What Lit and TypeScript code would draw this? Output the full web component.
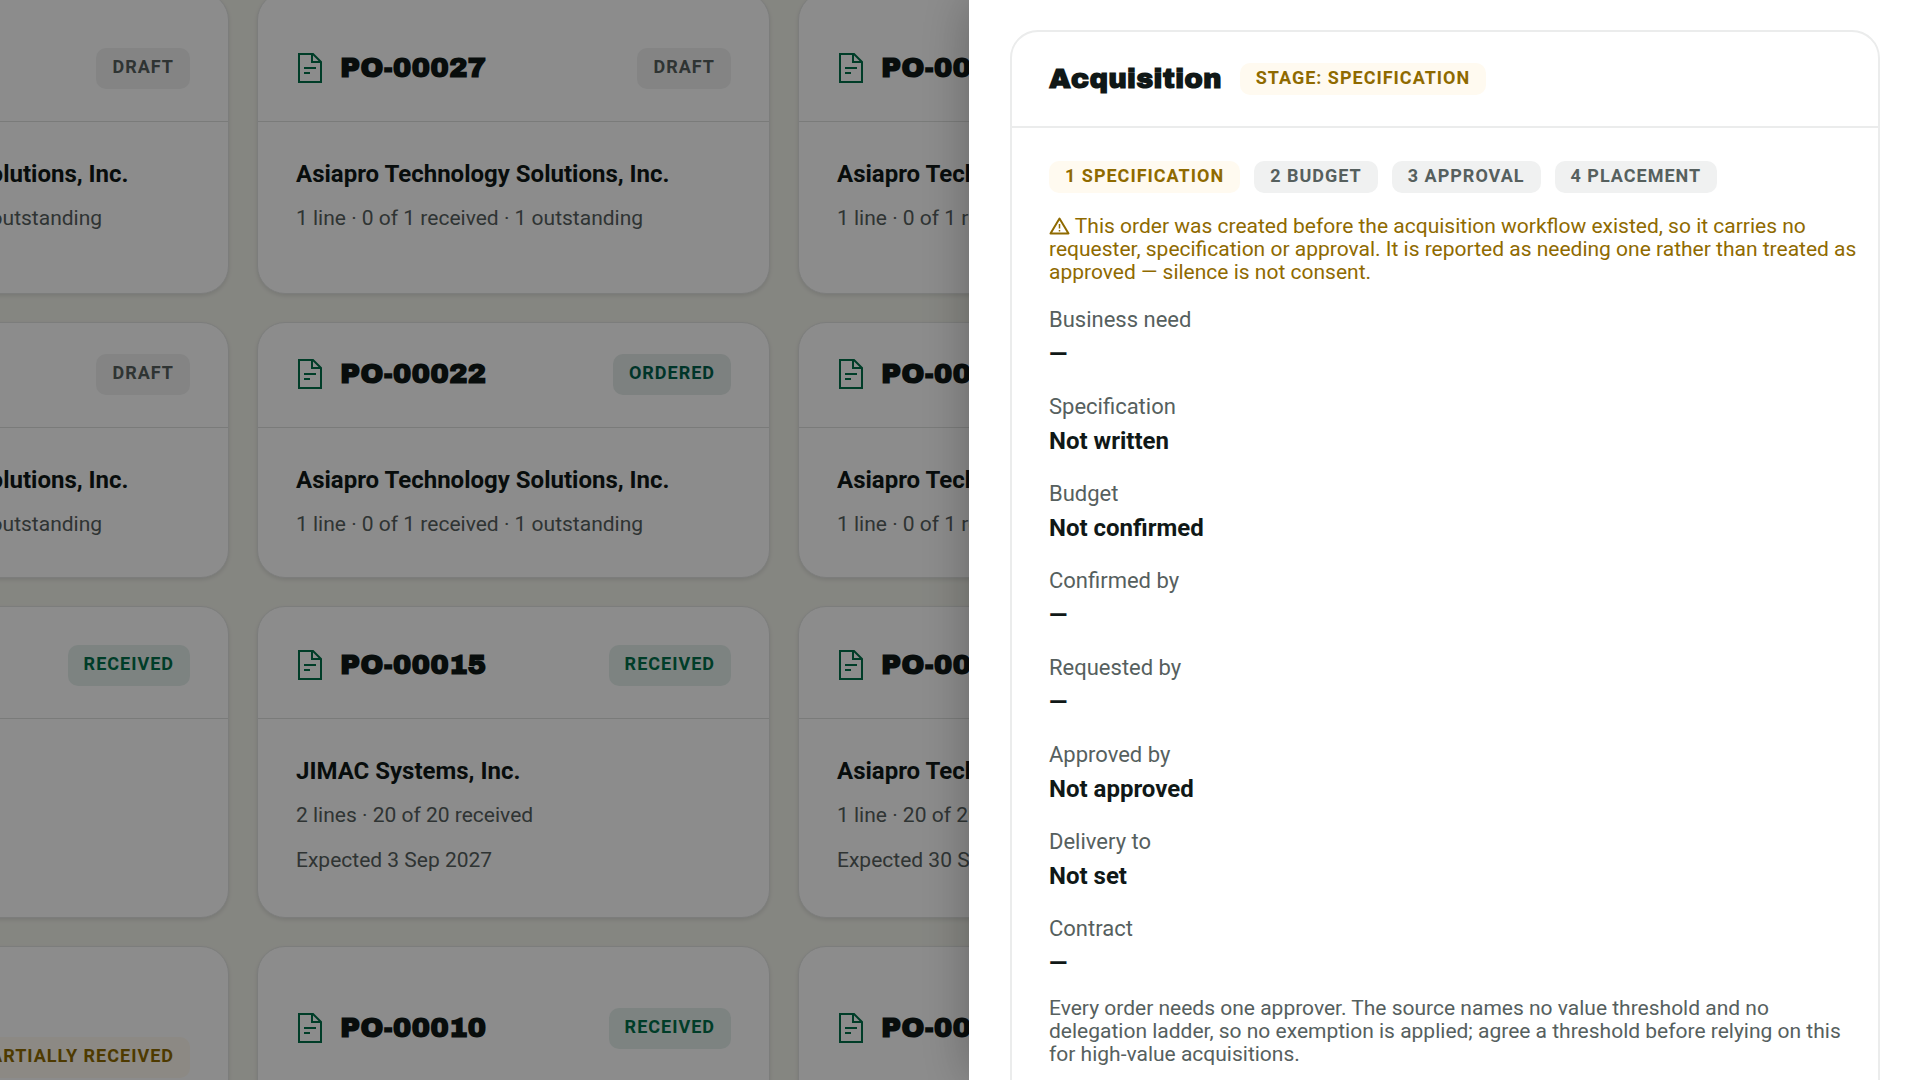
import { LitElement, html, css, svg } from "lit";
import { customElement, property } from "lit/decorators.js";

type Tone = "neutral" | "info" | "success" | "warning";

interface Order {
  number: string;
  status: string;
  tone: Tone;
  supplier: string;
  lines: string[];
}

interface OrderRow {
  size: string;
  orders: Order[];
}

const ASIAPRO = "Asiapro Technology Solutions, Inc.";
const JIMAC = "JIMAC Systems, Inc.";
const OPEN_LINE = "1 line · 0 of 1 received · 1 outstanding";

const order = (number: string, status: string, tone: Tone, supplier: string, ...lines: string[]): Order => ({
  number,
  status,
  tone,
  supplier,
  lines,
});

const ROWS: OrderRow[] = [
  {
    size: "tall",
    orders: [
      order("PO-00028", "Draft", "neutral", ASIAPRO, OPEN_LINE),
      order("PO-00027", "Draft", "neutral", ASIAPRO, OPEN_LINE),
      order("PO-00026", "Draft", "neutral", ASIAPRO, OPEN_LINE),
    ],
  },
  {
    size: "compact",
    orders: [
      order("PO-00023", "Draft", "neutral", ASIAPRO, OPEN_LINE),
      order("PO-00022", "Ordered", "info", ASIAPRO, OPEN_LINE),
      order("PO-00021", "Ordered", "info", ASIAPRO, OPEN_LINE),
    ],
  },
  {
    size: "regular",
    orders: [
      order("PO-00016", "Received", "success", JIMAC, "1 line · 5 of 5 received"),
      order("PO-00015", "Received", "success", JIMAC, "2 lines · 20 of 20 received", "Expected 3 Sep 2027"),
      order("PO-00014", "Received", "success", ASIAPRO, "1 line · 20 of 20 received", "Expected 30 Sep 2027"),
    ],
  },
  {
    size: "wrapped",
    orders: [
      order("PO-00011", "Partially received", "warning", JIMAC, "1 line · 5 of 10 received"),
      order("PO-00010", "Received", "success", JIMAC, "1 line · 5 of 5 received"),
      order("PO-00009", "Received", "success", ASIAPRO, "1 line · 5 of 5 received"),
    ],
  },
];

const STEPS = ["Specification", "Budget", "Approval", "Placement"];

const FIELDS: [string, string][] = [
  ["Business need", "—"],
  ["Specification", "Not written"],
  ["Budget", "Not confirmed"],
  ["Confirmed by", "—"],
  ["Requested by", "—"],
  ["Approved by", "Not approved"],
  ["Delivery to", "Not set"],
  ["Contract", "—"],
];

const documentIcon = svg`
  <path d="M1 1H15L23 9V29H1Z" />
  <path d="M14 1V9H23" />
  <path d="M6 15H18M6 20H12" />
`;

@customElement("status-badge")
export class StatusBadge extends LitElement {
  @property() tone: Tone = "neutral";

  static styles = css`
    :host {
      display: inline-flex;
      flex: none;
      font: 700 18px/23px Roboto, "Liberation Sans", sans-serif;
    }
    .badge {
      padding: 3px 16px 6px;
      border-radius: 10px;
      letter-spacing: 1px;
      text-transform: uppercase;
      white-space: nowrap;
    }
    :host([size="large"]) .badge {
      padding: 7px 16px 11px;
    }
    .neutral {
      background: #f0f1f1;
      color: #56605e;
    }
    .info {
      background: #e3ebe9;
      color: #00614c;
    }
    .success {
      background: #e4efec;
      color: #00704a;
    }
    .warning {
      background: #fffaf0;
      color: #8f6a00;
    }
  `;

  render() {
    return html`<span class="badge ${this.tone}"><slot></slot></span>`;
  }
}

@customElement("order-card")
export class OrderCard extends LitElement {
  @property({ attribute: false }) order!: Order;

  static styles = css`
    :host {
      display: block;
      min-width: 0;
    }
    .card {
      height: 100%;
      box-sizing: border-box;
      border: 1px solid #e2e4e2;
      border-radius: 28px;
      background: #fff;
      box-shadow: 0 2px 4px rgba(0, 0, 0, 0.1);
    }
    .head {
      display: flex;
      flex-wrap: wrap;
      align-items: center;
      gap: 18px 24px;
      padding: var(--head-top, 32px) 38px 32px;
      border-bottom: 1px solid #dfe1df;
    }
    .status {
      margin-left: auto;
    }
    .title {
      display: flex;
      align-items: center;
      gap: 18px;
      margin: 0 0 2px 2px;
    }
    .icon {
      width: 24px;
      height: 30px;
      fill: none;
      stroke: #00704a;
      stroke-width: 2;
    }
    .number {
      margin: 0;
      font: 900 28px/32px "Archivo Black", Inter, "Liberation Sans", sans-serif;
      color: #101817;
    }
    .body {
      display: flex;
      flex-direction: column;
      gap: 16px;
      padding: 38px 38px 36px;
    }
    .supplier {
      margin: 0;
      font-size: 24px;
      line-height: 28px;
      font-weight: 700;
      color: #101817;
    }
    .line {
      margin: 0;
      font-size: 21px;
      line-height: 29px;
      color: #56605e;
    }
  `;

  render() {
    const { number, status, tone, supplier, lines } = this.order;
    return html`
      <article class="card">
        <header class="head">
          <div class="title">
            <svg class="icon" viewBox="0 0 24 30" aria-hidden="true">${documentIcon}</svg>
            <h3 class="number">${number}</h3>
          </div>
          <status-badge class="status" size="large" tone=${tone}>${status}</status-badge>
        </header>
        <div class="body">
          <p class="supplier">${supplier}</p>
          ${lines.map((line) => html`<p class="line">${line}</p>`)}
        </div>
      </article>
    `;
  }
}

@customElement("acquisition-panel")
export class AcquisitionPanel extends LitElement {
  static styles = css`
    :host {
      display: block;
    }
    .panel {
      border: 2px solid #ebecec;
      border-radius: 28px;
      background: #fff;
    }
    .head {
      display: flex;
      align-items: center;
      gap: 18px;
      padding: 29px 37px 29px;
      border-bottom: 2px solid #ebecec;
    }
    .title {
      margin: 0;
      font: 900 28px/36px "Archivo Black", Inter, "Liberation Sans", sans-serif;
      color: #101817;
    }
    .body {
      padding: 33px 20px 40px 37px;
    }
    .steps {
      display: flex;
      flex-wrap: wrap;
      gap: 14px;
      margin: 0 0 22px;
      padding: 0;
      list-style: none;
    }
    .step {
      display: flex;
    }
    .note {
      margin: 0;
      font-size: 21px;
      line-height: 23px;
      color: #56605e;
    }
    .warning {
      color: #8f6a00;
    }
    .alert {
      width: 21px;
      height: 18px;
      vertical-align: -2px;
      fill: none;
      stroke: currentColor;
      stroke-width: 2;
      stroke-linejoin: round;
    }
    .fields {
      display: grid;
      gap: 23px;
      margin: 22px 0 18px;
    }
    .field {
      display: grid;
      gap: 4px;
    }
    .label {
      font-size: 22px;
      line-height: 28px;
      color: #56605e;
    }
    .value {
      margin: 0;
      font-size: 24px;
      line-height: 32px;
      font-weight: 700;
      color: #101817;
    }
  `;

  render() {
    return html`
      <section class="panel" aria-labelledby="acquisition-title">
        <header class="head">
          <h2 class="title" id="acquisition-title">Acquisition</h2>
          <status-badge tone="warning">Stage: Specification</status-badge>
        </header>
        <div class="body">
          <ol class="steps">
            ${STEPS.map(
              (step, i) => html`
                <li class="step">
                  <status-badge tone=${i === 0 ? "warning" : "neutral"}>${i + 1} ${step}</status-badge>
                </li>
              `,
            )}
          </ol>
          <p class="note warning">
            <svg class="alert" viewBox="0 0 21 18" aria-hidden="true">
              <path d="M10.5 1.5L19.5 16.5H1.5Z" />
              <path d="M10.5 7V11.5M10.5 13V14.5" stroke-width="1.5" />
            </svg>
            This order was created before the acquisition workflow existed, so it carries no requester, specification
            or approval. It is reported as needing one rather than treated as approved — silence is not consent.
          </p>
          <dl class="fields">
            ${FIELDS.map(
              ([label, value]) => html`
                <div class="field">
                  <dt class="label">${label}</dt>
                  <dd class="value">${value}</dd>
                </div>
              `,
            )}
          </dl>
          <p class="note">
            Every order needs one approver. The source names no value threshold and no delegation ladder, so no
            exemption is applied; agree a threshold before relying on this for high-value acquisitions.
          </p>
        </div>
      </section>
    `;
  }
}

@customElement("app-root")
export class AppRoot extends LitElement {
  static styles = css`
    :host {
      display: block;
      height: 100vh;
      overflow: hidden;
      background: #f3f4ec;
      font-family: Roboto, "Liberation Sans", sans-serif;
    }
    /* The board is scrolled, so its first column and first row start off screen. */
    .board {
      display: grid;
      gap: 28px;
      margin: -8px 68px 0 -284px;
    }
    .row {
      display: grid;
      grid-template-columns: repeat(4, minmax(0, 1fr));
      gap: 28px;
    }
    .tall {
      --head-top: 55px;
      min-height: 302px;
    }
    .compact {
      --head-top: 31px;
      min-height: 256px;
    }
    .regular {
      --head-top: 38px;
      min-height: 312px;
    }
    .wrapped {
      --head-top: 38px;
      min-height: 312px;
    }
    .wrapped order-card:not(:first-child) {
      --head-top: 61px;
    }
    .scrim {
      position: fixed;
      inset: 0;
      display: flex;
      justify-content: flex-end;
      background: rgba(0, 0, 0, 0.45);
    }
    .drawer {
      box-sizing: border-box;
      width: 951px;
      max-width: 100%;
      overflow: hidden;
      padding: 30px 40px 0 41px;
      background: #fff;
      box-shadow: 0 0 48px rgba(0, 0, 0, 0.28);
    }
  `;

  render() {
    return html`
      <main class="board">
        ${ROWS.map(
          (row) => html`
            <div class="row ${row.size}">
              ${row.orders.map((item) => html`<order-card .order=${item}></order-card>`)}
            </div>
          `,
        )}
      </main>
      <div class="scrim">
        <aside class="drawer" role="dialog" aria-label="Purchase order">
          <acquisition-panel></acquisition-panel>
        </aside>
      </div>
    `;
  }
}
